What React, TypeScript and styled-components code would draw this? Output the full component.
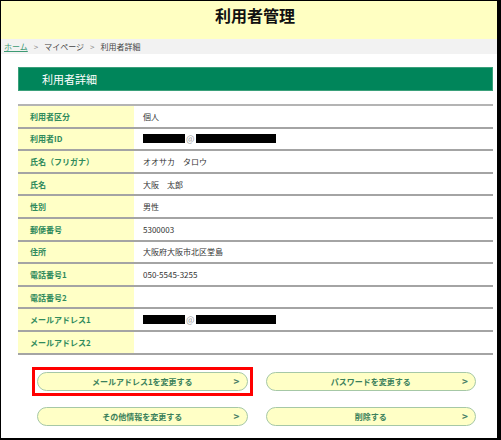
import styled, {createGlobalStyle} from 'styled-components';

const GlobalStyle = createGlobalStyle`
    html, body {
        margin: 0;
        padding: 0;
        background: #ffffff;
        font-family: "Noto Sans CJK JP", "Noto Sans", "Liberation Sans", sans-serif;
    }
`;

const Frame = styled.div`
    width: 501px;
    height: 440px;
    box-sizing: border-box;
    border: 1px solid #000;
    border-right-width: 4px;
    border-bottom-width: 2px;
    overflow: hidden;
    background: #fff;
`;

const Header = styled.header`
    height: 38px;
    background: #ffffc2;
    padding: 3px 0 0 12px;
    box-sizing: border-box;
    h1 {
        margin: 0;
        text-align: center;
        font-size: 16px;
        line-height: 22px;
        font-weight: bold;
        color: #111;
    }
`;

const Breadcrumb = styled.nav`
    height: 15px;
    background: #f2f2f2;
    padding-left: 3px;
    display: flex;
    align-items: center;
    font-size: 8px;
    color: #444;
    a {
        color: #3d9a74;
        text-decoration: underline;
    }
`;

const Sep = styled.span`
    margin: 0 6px;
    color: #888;
    font-size: 8px;
`;

const Main = styled.main`
    margin-left: 17px;
    width: 475px;
`;

const SectionTitle = styled.h2`
    margin: 13px 0 0;
    height: 24px;
    background: #00855a;
    border: 1px solid #3aa07a;
    box-sizing: border-box;
    color: #fff;
    font-size: 11px;
    font-weight: normal;
    padding-left: 23px;
    display: flex;
    align-items: center;
`;

const DetailTable = styled.div`
    margin-top: 13px;
    border-top: 2px solid #b4b4b4;
`;

const Row = styled.div`
    display: grid;
    grid-template-columns: 116px 1fr;
    height: 22.6px;
    box-sizing: border-box;
    border-bottom: 2px solid #a4a4a4;
`;

const Label = styled.div`
    background: #ffffc6;
    color: #2f8a5c;
    font-weight: bold;
    font-size: 8px;
    padding-left: 12px;
    display: flex;
    align-items: center;
`;

const Value = styled.div`
    color: #333;
    font-size: 8px;
    padding-left: 9px;
    display: flex;
    align-items: center;
`;

const Redact = styled.span<{w: number}>`
    display: inline-block;
    width: ${(p) => p.w}px;
    height: 9px;
    background: #000;
`;

const At = styled.span`
    color: #999;
    font-size: 9px;
    margin: 0 1px;
`;

const Buttons = styled.div`
    margin-top: 17px;
    padding: 0 17px 0 19px;
    display: grid;
    grid-template-columns: 1fr 1fr;
    column-gap: 18px;
    row-gap: 16px;
`;

const Highlight = styled.div<{on?: boolean}>`
    outline: ${(p) => (p.on ? '3px solid #ff0000' : 'none')};
    outline-offset: 2px;
`;

const ActionButton = styled.button`
    position: relative;
    width: 100%;
    height: 19px;
    border-radius: 10px;
    border: 1px solid #a6c8a6;
    background: #ffffc6;
    color: #3a7f5a;
    font-family: inherit;
    font-size: 8px;
    font-weight: bold;
    cursor: pointer;
    display: flex;
    align-items: center;
    justify-content: center;
    padding: 0;
`;

const Chevron = styled.span`
    position: absolute;
    right: 7px;
    top: 50%;
    transform: translateY(-52%);
    font-size: 10px;
    font-weight: bold;
    color: #4a7f66;
`;

type Item = {label: string; value: React.ReactNode};

const email = (
    <>
        <Redact w={42} />
        <At>@</At>
        <Redact w={80} />
    </>
);

const items: Item[] = [
    {label: '利用者区分', value: '個人'},
    {label: '利用者ID', value: email},
    {label: '氏名（フリガナ）', value: 'オオサカ　タロウ'},
    {label: '氏名', value: '大阪　太郎'},
    {label: '性別', value: '男性'},
    {label: '郵便番号', value: '5300003'},
    {label: '住所', value: '大阪府大阪市北区堂島'},
    {label: '電話番号1', value: '050-5545-3255'},
    {label: '電話番号2', value: ''},
    {label: 'メールアドレス1', value: email},
    {label: 'メールアドレス2', value: ''},
];

const actions = ['メールアドレス1を変更する', 'パスワードを変更する', 'その他情報を変更する', '削除する'];

export default function App() {
    return (
        <>
            <GlobalStyle />
            <Frame>
                <Header>
                    <h1>利用者管理</h1>
                </Header>
                <Breadcrumb>
                    <a href="#">ホーム</a>
                    <Sep>&gt;</Sep>
                    <span>マイページ</span>
                    <Sep>&gt;</Sep>
                    <span>利用者詳細</span>
                </Breadcrumb>
                <Main>
                    <SectionTitle>利用者詳細</SectionTitle>
                    <DetailTable>
                        {items.map((it) => (
                            <Row key={it.label}>
                                <Label>{it.label}</Label>
                                <Value>{it.value}</Value>
                            </Row>
                        ))}
                    </DetailTable>
                    <Buttons>
                        {actions.map((a, i) => (
                            <Highlight key={a} on={i === 0}>
                                <ActionButton>
                                    {a}
                                    <Chevron>&gt;</Chevron>
                                </ActionButton>
                            </Highlight>
                        ))}
                    </Buttons>
                </Main>
            </Frame>
        </>
    );
}
